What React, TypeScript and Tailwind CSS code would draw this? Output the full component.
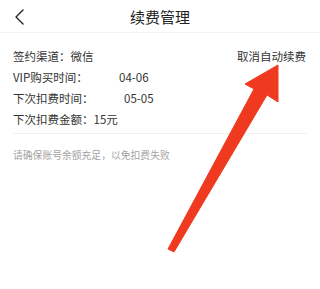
import React from "react";

export default function App() {
  const font = { fontFamily: '"Noto Sans CJK SC", "Noto Sans", sans-serif' };
  return (
    <div className="relative w-[320px] h-[289px] bg-white overflow-hidden" style={font}>
      <div className="relative h-[33px] border-b border-[#f3f3f3] flex items-center justify-center">
        <svg className="absolute left-[14px] top-[8px]" width="12" height="18" viewBox="0 0 12 18">
          <path d="M9 2 L2 9 L9 16" fill="none" stroke="#222" strokeWidth="1.4" strokeLinecap="round" strokeLinejoin="round" />
        </svg>
        <span className="text-[15px] text-[#222] leading-none">续费管理</span>
      </div>
      <div className="px-[13px] pt-[13px]">
        <div className="h-[21px] flex items-center justify-between text-[11.5px] text-[#333]">
          <span>签约渠道：微信</span>
          <span className="mr-[1px]">取消自动续费</span>
        </div>
        <div className="h-[21px] flex items-center text-[11.5px] text-[#333]">
          <span className="w-[106px]">VIP购买时间：</span>
          <span>04-06</span>
        </div>
        <div className="h-[21px] flex items-center text-[11.5px] text-[#333]">
          <span className="w-[111px]">下次扣费时间：</span>
          <span>05-05</span>
        </div>
        <div className="h-[21px] flex items-center text-[11.5px] text-[#333]">
          <span>下次扣费金额：15元</span>
        </div>
        <div className="mt-[3px] border-t border-[#f0f0f0]" />
        <div className="mt-[14px] h-[14px] flex items-center text-[9.8px] text-[#a3a3a3]">
          请确保账号余额充足，以免扣费失败
        </div>
      </div>
      <svg className="absolute left-0 top-0" width="320" height="289" viewBox="0 0 320 289">
        <polygon
          points="278,65 278,102 267,95 174,252 168,249 254,89 245,84"
          fill="#f03a1f"
          stroke="#f03a1f"
          strokeWidth="1"
          strokeLinejoin="round"
        />
      </svg>
    </div>
  );
}
